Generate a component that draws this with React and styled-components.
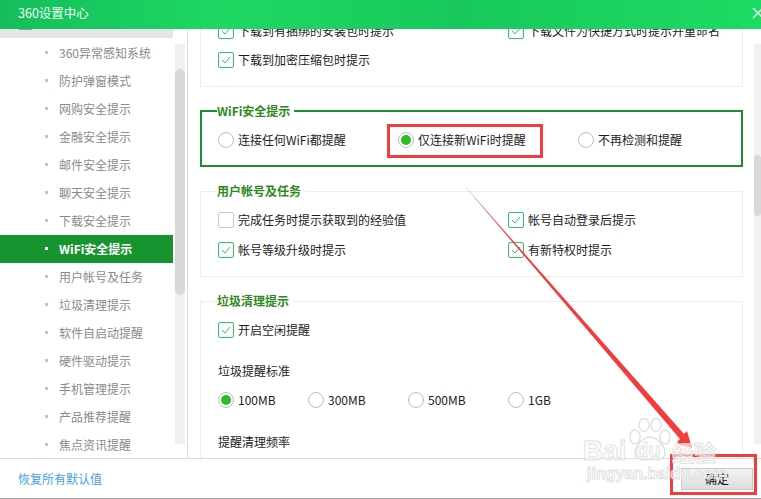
import React from "react"
import styled, { createGlobalStyle } from "styled-components"

const menu = [
  "360异常感知系统",
  "防护弹窗模式",
  "网购安全提示",
  "金融安全提示",
  "邮件安全提示",
  "聊天安全提示",
  "下载安全提示",
  "WiFi安全提示",
  "用户帐号及任务",
  "垃圾清理提示",
  "软件自启动提醒",
  "硬件驱动提示",
  "手机管理提示",
  "产品推荐提醒",
  "焦点资讯提醒",
]

function Check({ checked, children }) {
  return (
    <Option>
      <CheckBox $checked={checked}>
        {checked && (
          <svg width="10" height="8" viewBox="0 0 10 8" fill="none">
            <path d="M1 4l3 3 5-6" stroke="#2fc46a" strokeWidth="1" />
          </svg>
        )}
      </CheckBox>
      {children}
    </Option>
  )
}

function Radio({ checked, width, children }) {
  return (
    <Option $width={width}>
      <RadioDot $checked={checked} />
      {children}
    </Option>
  )
}

export default function App() {
  return (
    <Window>
      <GlobalStyle />
      <TitleBar>
        <Title>360设置中心</Title>
        <CloseIcon width="12" height="12" viewBox="0 0 12 12">
          <path d="M1 1l10 10M11 1L1 11" stroke="#e8fff0" strokeWidth="1.4" />
        </CloseIcon>
      </TitleBar>
      <Body>
        <Sidebar>
          <MenuList>
            <MenuHead />
            {menu.map((m) => (
              <MenuItem key={m} $active={m === "WiFi安全提示"}>
                {m}
              </MenuItem>
            ))}
          </MenuList>
          <Track $width={10}>
            <Thumb $top={25} $height={226} />
          </Track>
        </Sidebar>
        <Content>
          <Groups>
            <Group $height={93}>
              <Legend>下载安全提示</Legend>
              <Row>
                <Column>
                  <Check checked>下载到有捆绑的安装包时提示</Check>
                </Column>
                <Check checked>下载文件为快捷方式时提示并重命名</Check>
              </Row>
              <Row $height={28}>
                <Check checked>下载到加密压缩包时提示</Check>
              </Row>
            </Group>
            <Group $height={64} $strong>
              <Legend $strong>WiFi安全提示</Legend>
              <Row>
                <Radio width={180}>连接任何WiFi都提醒</Radio>
                <Radio width={180} checked>
                  仅连接新WiFi时提醒
                </Radio>
                <Radio>不再检测和提醒</Radio>
              </Row>
            </Group>
            <Group $height={94}>
              <Legend>用户帐号及任务</Legend>
              <Row>
                <Column>
                  <Check>完成任务时提示获取到的经验值</Check>
                </Column>
                <Check checked>帐号自动登录后提示</Check>
              </Row>
              <Row>
                <Column>
                  <Check checked>帐号等级升级时提示</Check>
                </Column>
                <Check checked>有新特权时提示</Check>
              </Row>
            </Group>
            <Group $height={200}>
              <Legend>垃圾清理提示</Legend>
              <Row>
                <Check checked>开启空闲提醒</Check>
              </Row>
              <Label $gap={18}>垃圾提醒标准</Label>
              <Row>
                <Radio width={90} checked>
                  100MB
                </Radio>
                <Radio width={100}>300MB</Radio>
                <Radio width={100}>500MB</Radio>
                <Radio>1GB</Radio>
              </Row>
              <Label $gap={19}>提醒清理频率</Label>
            </Group>
          </Groups>
          <Track $width={7}>
            <Thumb $top={111} $height={61} />
          </Track>
        </Content>
      </Body>
      <Footer>
        <ResetLink>恢复所有默认值</ResetLink>
        <OkButton>确定</OkButton>
      </Footer>

      <Callout $left={387} $top={124} $width={156} $height={34} />
      <Callout $left={670} $top={454} $width={87} $height={41} />
      <ArrowLayer width="761" height="499" viewBox="0 0 761 499">
        <path d="M463 184L684 434L687 431L692 448L676 443L680 439Z" fill="#f53c3c" />
      </ArrowLayer>
      <Watermark>
        <WatermarkTop>
          <WatermarkLogo>Bai</WatermarkLogo>
          <PawMark>
            <svg width="44" height="44" viewBox="0 0 44 44">
              <g fill="rgba(255,255,255,0.45)" stroke="#e2e2e2" strokeWidth="1.5">
                <ellipse cx="7" cy="19" rx="5" ry="7" />
                <ellipse cx="16" cy="7" rx="5" ry="6.5" />
                <ellipse cx="28" cy="7" rx="5" ry="6.5" />
                <ellipse cx="37" cy="19" rx="5" ry="7" />
                <path d="M22 19c-7 0-15 9-15 16 0 7 9 8 15 6 6 2 15 1 15-6 0-7-8-16-15-16z" />
              </g>
            </svg>
            <PawText>du</PawText>
          </PawMark>
          <WatermarkCn>经验</WatermarkCn>
        </WatermarkTop>
        <WatermarkUrl>jingyan.baidu.com</WatermarkUrl>
      </Watermark>
    </Window>
  )
}

const GlobalStyle = createGlobalStyle`
  html, body {
    margin: 0;
    padding: 0;
    background: #fff;
  }
  * {
    box-sizing: border-box;
  }
`
const Window = styled.div`
  position: relative;
  width: 761px;
  height: 499px;
  overflow: hidden;
  display: flex;
  flex-direction: column;
  font-family: "Noto Sans CJK SC", "Open Sans", sans-serif;
  font-size: 12px;
  color: #222;
`
const TitleBar = styled.div`
  height: 29px;
  flex: none;
  display: flex;
  align-items: center;
  justify-content: space-between;
  padding: 0 0 4px 18px;
  background: linear-gradient(90deg, #14be5c 0%, #1ed862 30%, #18c85c 60%, #1ddb62 100%);
`
const Title = styled.div`
  color: #f0fff4;
  font-size: 12.5px;
`
const CloseIcon = styled.svg`
  margin-right: -3px;
`
const Body = styled.div`
  flex: none;
  height: 429px;
  display: flex;
  overflow: hidden;
`
const Sidebar = styled.div`
  width: 188px;
  flex: none;
  display: flex;
  border-right: 1px solid #dcdcdc;
`
const MenuList = styled.div`
  width: 173px;
  margin-right: 2px;
  flex: none;
`
const MenuHead = styled.div`
  height: 9px;
  margin-bottom: 1px;
  padding-left: 19px;
  background: #e4e5e8;
  &::before {
    content: "";
    display: block;
    width: 13px;
    height: 1px;
    background: #9a9a9a;
  }
`
const MenuItem = styled.div`
  position: relative;
  height: 28px;
  line-height: 28px;
  padding-left: 59px;
  color: ${({ $active }) => ($active ? "#fff" : "#8a8a8a")};
  font-weight: ${({ $active }) => ($active ? "700" : "400")};
  background: ${({ $active }) => ($active ? "#17942f" : "transparent")};
  &::before {
    content: "";
    position: absolute;
    left: 45px;
    top: 12px;
    width: 3px;
    height: 3px;
    background: ${({ $active }) => ($active ? "#fff" : "#c4c4c4")};
  }
`
const Track = styled.div`
  width: ${({ $width }) => $width}px;
  height: 400px;
  margin-top: 15px;
  flex: none;
  background: #f1f1f1;
`
const Thumb = styled.div`
  width: 100%;
  height: ${({ $height }) => $height}px;
  margin-top: ${({ $top }) => $top}px;
  border-radius: 5px;
  background: #d8d8d8;
  float: left;
`
const Content = styled.div`
  flex: 1;
  display: flex;
  justify-content: space-between;
`
const Groups = styled.div`
  width: 555px;
  padding-left: 12px;
  margin-top: -35px;
  flex: none;
  display: flex;
  flex-direction: column;
  gap: 16px;
`
const Group = styled.fieldset`
  flex: none;
  height: ${({ $height }) => $height}px;
  margin: 0;
  padding: 6px 0 0 ${({ $strong }) => ($strong ? 16 : 17)}px;
  min-width: 0;
  border: ${({ $strong }) => ($strong ? "2px solid #17902f" : "1px solid #eeeee8")};
`
const Legend = styled.legend`
  margin-left: -1px;
  padding: 0 4px 0 0;
  font-weight: 700;
  line-height: 16px;
  color: #2c8a1c;
`
const Row = styled.div`
  display: flex;
  height: ${({ $height }) => $height || 30}px;
  align-items: center;
`
const Column = styled.div`
  width: 290px;
  flex: none;
`
const Option = styled.div`
  display: flex;
  align-items: center;
  gap: 4px;
  width: ${({ $width }) => ($width ? `${$width}px` : "auto")};
  flex: none;
  line-height: 16px;
  color: #1c1c1c;
`
const CheckBox = styled.span`
  width: 16px;
  height: 16px;
  flex: none;
  display: flex;
  align-items: center;
  justify-content: center;
  border-radius: 2px;
  border: 1px solid ${({ $checked }) => ($checked ? "#2fc46a" : "#c9c9c9")};
`
const RadioDot = styled.span`
  position: relative;
  width: 16px;
  height: 16px;
  flex: none;
  border-radius: 50%;
  border: 1px solid #bdbdbd;
  &::after {
    content: "";
    display: ${({ $checked }) => ($checked ? "block" : "none")};
    position: absolute;
    left: 2px;
    top: 2px;
    width: 10px;
    height: 10px;
    border-radius: 50%;
    background: #2bbd22;
  }
`
const Label = styled.div`
  margin-top: ${({ $gap }) => $gap}px;
  line-height: 16px;
  height: 22px;
  color: #1c1c1c;
`
const Footer = styled.div`
  flex: none;
  height: 41px;
  display: flex;
  align-items: center;
  justify-content: space-between;
  padding: 0 8px 0 18px;
  border-top: 1px solid #dcdcdc;
  border-bottom: 1px solid #a8a8a8;
`
const ResetLink = styled.a`
  color: #3f9fe8;
`
const OkButton = styled.button`
  width: 72px;
  height: 22px;
  padding: 0;
  font: inherit;
  color: #111;
  border: 1px solid #c8c8c8;
  background: linear-gradient(180deg, #f4f4f4, #dcdcdc);
`
const Callout = styled.div`
  position: absolute;
  left: ${({ $left }) => $left}px;
  top: ${({ $top }) => $top}px;
  width: ${({ $width }) => $width}px;
  height: ${({ $height }) => $height}px;
  border: 3px solid #f53c3c;
`
const ArrowLayer = styled.svg`
  position: absolute;
  left: 0;
  top: 0;
  pointer-events: none;
`
const Watermark = styled.div`
  position: absolute;
  left: 583px;
  top: 418px;
  width: 140px;
  pointer-events: none;
  color: rgba(255, 255, 255, 0.55);
  font-family: "Liberation Sans", sans-serif;
  font-weight: 700;
  -webkit-text-stroke: 1px #e2e2e2;
`
const WatermarkTop = styled.div`
  display: flex;
  align-items: flex-end;
  height: 44px;
`
const WatermarkLogo = styled.span`
  font-size: 28px;
  line-height: 28px;
  width: 45px;
  flex: none;
  margin-bottom: -3px;
`
const PawMark = styled.div`
  position: relative;
  width: 44px;
  height: 44px;
  flex: none;
  svg {
    display: block;
  }
`
const PawText = styled.span`
  position: absolute;
  left: 8px;
  bottom: 1px;
  font-size: 20px;
  line-height: 22px;
`
const WatermarkCn = styled.span`
  font-family: "Noto Sans CJK SC", sans-serif;
  font-size: 22px;
  line-height: 24px;
  flex: none;
  margin-bottom: -1px;
`
const WatermarkUrl = styled.div`
  font-size: 16px;
  line-height: 20px;
  padding: 2px 0 0 4px;
  white-space: nowrap;
`
